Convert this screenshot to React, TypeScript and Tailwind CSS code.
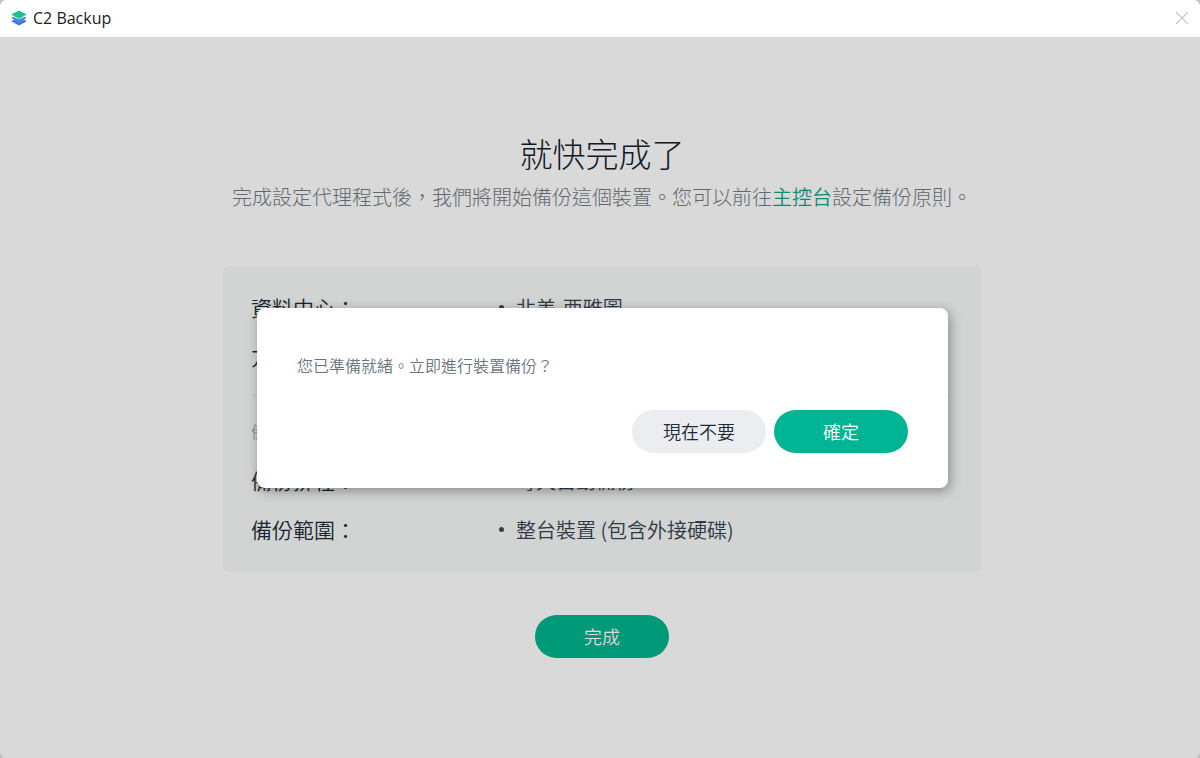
import { X } from "lucide-react";

function Logo() {
  return (
    <svg viewBox="0 0 16 16" className="h-4 w-4" aria-hidden="true">
      <path d="M0.3 11.2 L3.2 9.6 L8 12 L12.8 9.6 L15.7 11.2 L8 15.6 Z" fill="#3a76e6" />
      <path d="M0.3 8.1 L2.6 7 L8 9.6 L13.4 7 L15.7 8.1 L8 12 Z" fill="#3584e0" />
      <path d="M8 0.4 L15.7 4.6 L8 9 L0.3 4.6 Z" fill="#1fbf95" />
    </svg>
  );
}

const agentRows = [
  { label: "資料中心：", value: "北美-西雅圖" },
  { label: "方案", value: "" },
];

const policyRows = [
  { label: "備份排程：", value: "每天自動備份" },
  { label: "備份範圍：", value: "整台裝置 (包含外接硬碟)" },
];

function Row({ label, value }: { label: string; value: string }) {
  return (
    <div className="flex h-[49px] items-center">
      <dt className="w-[248px] shrink-0 text-[21px] font-[350] text-[#1e2a35]">{label}</dt>
      <dd className="flex items-center gap-3 text-[20px] font-[350] text-[#38434f]">
        <span className="h-[5px] w-[5px] rounded-full bg-[#414b55]" />
        {value}
      </dd>
    </div>
  );
}

export default function App() {
  return (
    <div className="bg-[#bdbdbd] font-['Noto_Sans_CJK_TC',sans-serif]">
      <div className="flex min-h-screen flex-col overflow-hidden rounded-md bg-white">
        <header className="flex h-[37px] items-center justify-between pb-[2px] pl-[11px] pr-[9px]">
          <div className="flex items-center gap-[6px]">
            <Logo />
            <span className="font-['Open_Sans',sans-serif] text-[16px] leading-5 text-[#1c1c1c]">
              C2 Backup
            </span>
          </div>
          <button type="button" aria-label="關閉" className="text-[#c4c4c4]">
            <X size={18} strokeWidth={1} absoluteStrokeWidth className="scale-125" />
          </button>
        </header>

        <main className="relative flex flex-1 flex-col">
          <div className="flex flex-1 flex-col items-center pb-[100px] pl-1 pt-[94px] font-light">
            <h1 className="text-[33px] leading-[44px] text-[#15202b]">就快完成了</h1>
            <p className="mt-[2px] text-[20px] leading-10 text-[#747b82]">
              完成設定代理程式後，我們將開始備份這個裝置。您可以前往
              <a href="#console" className="font-[350] text-[#12a585]">
                主控台
              </a>
              設定備份原則。
            </p>

            <section className="mt-[49px] w-full max-w-[758px] rounded-md bg-[#f6f9f8] px-7 pb-[18px] pt-[17px]">
              <dl>
                {agentRows.map((row) => (
                  <Row key={row.label} {...row} />
                ))}
              </dl>
              <h2 className="mt-[14px] flex h-[51px] items-end border-t border-[#eef1f0] pb-[3px] text-[16px] text-[#838a91]">
                備份原則
              </h2>
              <dl className="mt-[10px]">
                {policyRows.map((row) => (
                  <Row key={row.label} {...row} />
                ))}
              </dl>
            </section>

            <button
              type="button"
              className="mt-[43px] h-[43px] w-[134px] rounded-full bg-[#00b58f] text-[18px] font-[350] text-white"
            >
              完成
            </button>
          </div>

          <div className="absolute inset-0 flex items-center justify-center bg-black/15 pl-[5px]">
            <div
              role="dialog"
              aria-modal="true"
              aria-labelledby="backup-question"
              className="w-full max-w-[691px] rounded-lg bg-white px-10 pb-[35px] pt-[45px] shadow-[2px_3px_12px_rgba(0,0,0,0.35)]"
            >
              <p
                id="backup-question"
                className="text-[16px] font-[350] leading-6 text-[#6b7580]"
              >
                您已準備就緒。立即進行裝置備份？
              </p>
              <div className="mt-[33px] flex justify-end gap-2">
                <button
                  type="button"
                  className="h-[43px] w-[134px] rounded-full bg-[#ebedf1] text-[18px] font-[350] text-[#1e2a35]"
                >
                  現在不要
                </button>
                <button
                  type="button"
                  className="h-[43px] w-[134px] rounded-full bg-[#00b594] text-[18px] font-[350] text-white"
                >
                  確定
                </button>
              </div>
            </div>
          </div>
        </main>
      </div>
    </div>
  );
}
